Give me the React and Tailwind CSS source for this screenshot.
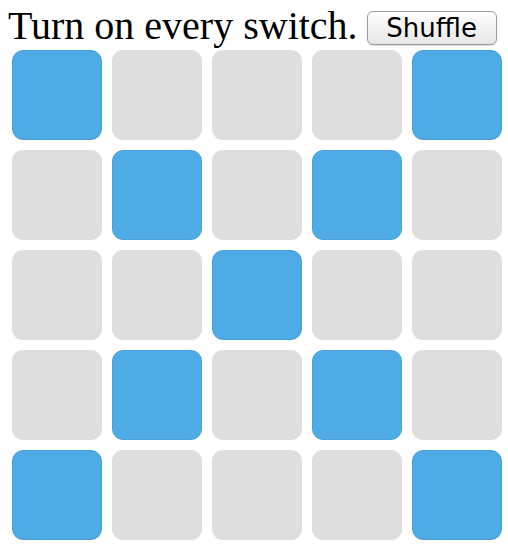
import React, { useState } from 'react';

const initial = [
    1, 0, 0, 0, 1,
    0, 1, 0, 1, 0,
    0, 0, 1, 0, 0,
    0, 1, 0, 1, 0,
    1, 0, 0, 0, 1,
];

const App = () => {
    const [cells, setCells] = useState(initial);

    const toggle = (i) => {
        const next = [...cells];
        next[i] = next[i] ? 0 : 1;
        setCells(next);
    };

    const shuffle = () => {
        setCells(cells.map(() => (Math.random() < 0.5 ? 1 : 0)));
    };

    return (
        <div className="p-2 bg-white min-h-screen">
            <div className="flex items-center h-[36px]">
                <span className="text-[40px] leading-none text-black" style={{ fontFamily: '"Liberation Serif", serif' }}>
                    Turn on every switch.
                </span>
                <button
                    onClick={shuffle}
                    className="ml-[9px] mt-[4px] w-[130px] h-[34px] rounded-[6px] border border-[#9a9a9a] bg-gradient-to-b from-white to-[#e6e6e6] text-[26px] leading-none text-black shadow-[0_1px_1px_rgba(0,0,0,0.15)]"
                    style={{ fontFamily: '"DejaVu Sans", sans-serif' }}
                >
                    Shuffle
                </button>
            </div>
            <div className="grid grid-cols-[repeat(5,90px)] gap-[10px] mt-[6px] ml-[4px]">
                {cells.map((on, i) => (
                    <div
                        key={i}
                        onClick={() => toggle(i)}
                        className={on
                            ? 'w-[90px] h-[90px] rounded-[11px] bg-[#4eabe6] border border-[#47a2dc]'
                            : 'w-[90px] h-[90px] rounded-[11px] bg-[#dedede]'}
                    />
                ))}
            </div>
        </div>
    );
};

export default App;
